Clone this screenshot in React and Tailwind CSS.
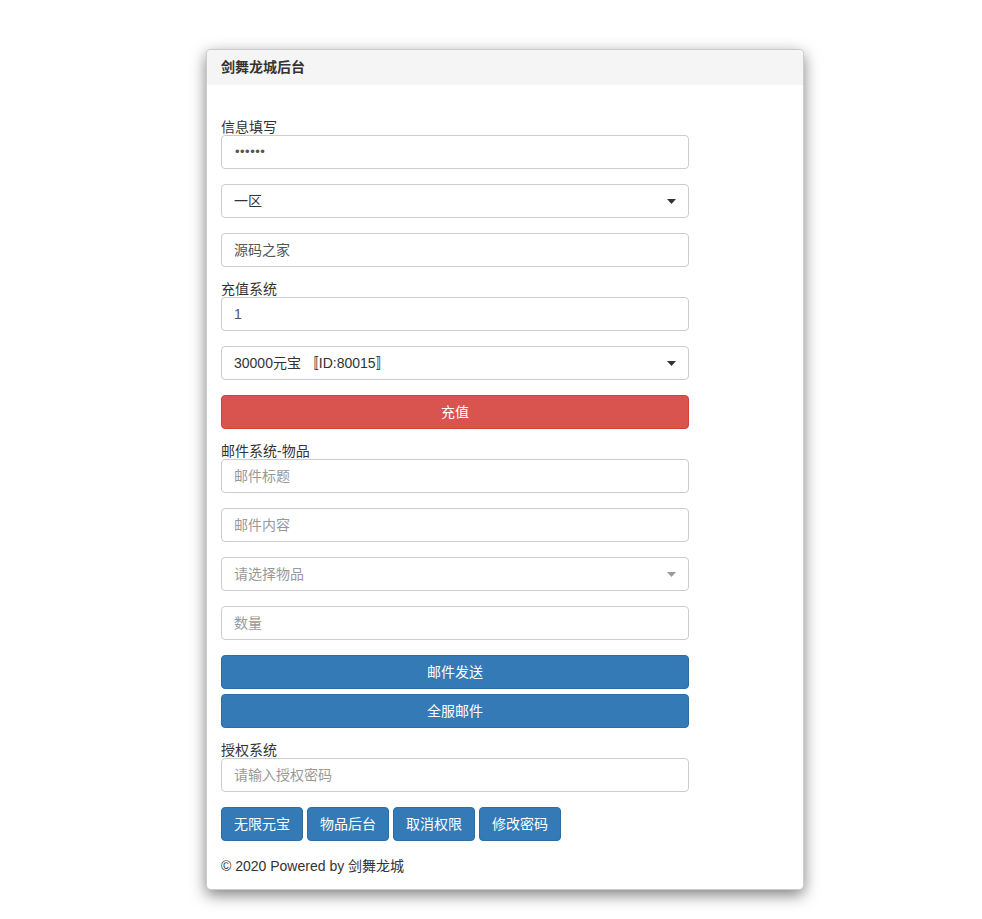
import React from "react";

const font = { fontFamily: '"Liberation Sans", "Noto Sans CJK SC", sans-serif' };

function Label({ children }) {
  return <div className="h-[15px] leading-[15px] text-[14px] text-[#333]">{children}</div>;
}

function Input({ value, placeholder, type }) {
  return (
    <div className="w-[468px] h-[34px] border border-[#ccc] rounded-[4px] bg-white px-[12px] flex items-center text-[14px]">
      {value ? (
        <span className={type === "password" ? "text-[#555] text-[13px] tracking-[0.5px] pl-[1px]" : "text-[#555]"}>{value}</span>
      ) : (
        <span className="text-[#999]">{placeholder}</span>
      )}
    </div>
  );
}

function Select({ value, placeholder }) {
  return (
    <div className="w-[468px] h-[34px] border border-[#ccc] rounded-[4px] bg-white pl-[12px] pr-[12px] flex items-center justify-between text-[14px]">
      {value ? <span className="text-[#333]">{value}</span> : <span className="text-[#999]">{placeholder}</span>}
      <svg width="9" height="5" viewBox="0 0 9 5">
        <path d="M0 0 L9 0 L4.5 5 Z" fill={value ? "#333" : "#999"} />
      </svg>
    </div>
  );
}

function FullBtn({ children, red }) {
  return (
    <div
      className={
        "w-[468px] h-[34px] rounded-[4px] flex items-center justify-center text-white text-[14px] border " +
        (red ? "bg-[#d9534f] border-[#d43f3a]" : "bg-[#337ab7] border-[#2e6da4]")
      }
    >
      {children}
    </div>
  );
}

function SmallBtn({ children }) {
  return (
    <div className="h-[34px] px-[12px] rounded-[4px] flex items-center justify-center text-white text-[14px] bg-[#337ab7] border border-[#2e6da4]">
      {children}
    </div>
  );
}

export default function App() {
  return (
    <div className="min-h-[919px] bg-white pt-[49px] pl-[206px]" style={font}>
      <div className="w-[598px] bg-white rounded-[5px] border border-[rgba(0,0,0,0.2)] shadow-[0_5px_15px_rgba(0,0,0,0.5)]">
        <div className="h-[35px] bg-[#f5f5f5] rounded-t-[5px] px-[14px] flex items-center text-[14px] font-bold text-[#333]">
          剑舞龙城后台
        </div>
        <div className="px-[14px] pt-[35px] pb-[13px] flex flex-col">
          <Label>信息填写</Label>
          <Input value="••••••" type="password" />
          <div className="h-[15px]" />
          <Select value="一区" />
          <div className="h-[15px]" />
          <Input value="源码之家" />
          <div className="h-[15px]" />
          <Label>充值系统</Label>
          <Input value="1" />
          <div className="h-[15px]" />
          <Select value="30000元宝 〚ID:80015〛" />
          <div className="h-[15px]" />
          <FullBtn red>充值</FullBtn>
          <div className="h-[15px]" />
          <Label>邮件系统-物品</Label>
          <Input placeholder="邮件标题" />
          <div className="h-[15px]" />
          <Input placeholder="邮件内容" />
          <div className="h-[15px]" />
          <Select placeholder="请选择物品" />
          <div className="h-[15px]" />
          <Input placeholder="数量" />
          <div className="h-[15px]" />
          <FullBtn>邮件发送</FullBtn>
          <div className="h-[5px]" />
          <FullBtn>全服邮件</FullBtn>
          <div className="h-[15px]" />
          <Label>授权系统</Label>
          <Input placeholder="请输入授权密码" />
          <div className="h-[15px]" />
          <div className="flex gap-[4px]">
            <SmallBtn>无限元宝</SmallBtn>
            <SmallBtn>物品后台</SmallBtn>
            <SmallBtn>取消权限</SmallBtn>
            <SmallBtn>修改密码</SmallBtn>
          </div>
          <div className="h-[15px]" />
          <div className="h-[20px] leading-[20px] text-[14px] text-[#333]">© 2020 Powered by 剑舞龙城</div>
        </div>
      </div>
    </div>
  );
}
